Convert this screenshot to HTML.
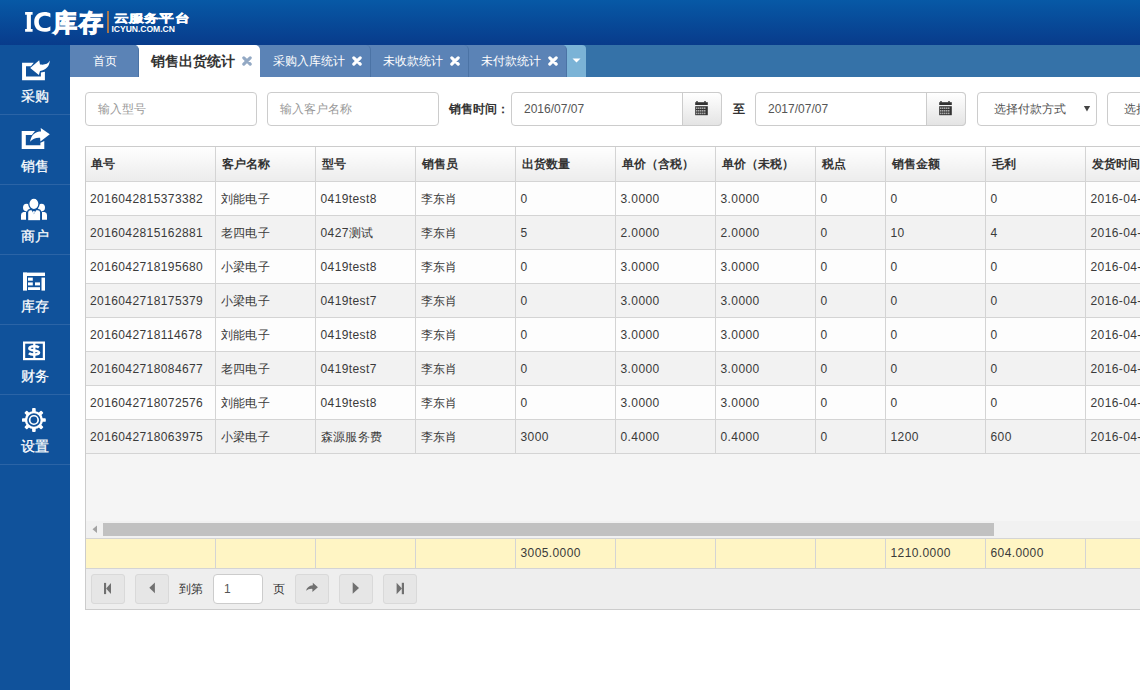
<!DOCTYPE html>
<html><head><meta charset="utf-8">
<style>
*{margin:0;padding:0;box-sizing:border-box}
html,body{width:1140px;height:690px;overflow:hidden;background:#fff;font-family:"Liberation Sans",sans-serif;font-size:12px;color:#333}
.abs{position:absolute}
#hdr{left:0;top:0;width:1140px;height:45px;background:linear-gradient(#0759a6,#083b8b)}
#side{left:0;top:45px;width:70px;height:645px;background:#10529b}
.mi{position:absolute;left:0;width:70px;height:70px;border-bottom:1px solid #2b64a6}
.mi .t{position:absolute;left:0;width:70px;top:43px;text-align:center;color:#fff;font-size:14px;line-height:16px;padding-left:0;-webkit-text-stroke:0.25px #fff}
.mi svg{position:absolute;left:0;top:0}
#tabbar{left:70px;top:45px;width:1070px;height:32px;background:#3572a8}
.tab{position:absolute;top:45px;height:32px;background:#5b83b6;border-right:1px solid #4b73a5;border-radius:0 5px 0 0;color:#fff;font-size:12px;line-height:32px}
.tab .tx{position:absolute;top:0}
.tab svg{position:absolute;top:11px}
.inp{position:absolute;top:92px;height:34px;border:1px solid #ccc;border-radius:4px;background:#fff;font-size:12px;line-height:32px;padding-left:12px;color:#999}
.calb{position:absolute;top:92px;height:34px;border:1px solid #ccc;border-radius:0 4px 4px 0;background:linear-gradient(#fff,#e4e4e4)}
.lbl{position:absolute;top:92px;line-height:34px;font-weight:bold;color:#333;font-size:12px}
#grid{left:85px;top:146px;width:1100px;height:464px;border:1px solid #ccc;background:#f5f5f5;overflow:hidden}
table{border-collapse:collapse;table-layout:fixed;position:absolute;left:-1px;top:-1px;width:1100px}
td,th{border-right:1px solid #d4d4d4;border-bottom:1px solid #d4d4d4;padding-left:5px;text-align:left;white-space:nowrap;overflow:hidden;font-size:12px;color:#333}
th{height:35px;padding-top:2px;padding-left:6px;font-weight:bold;background:linear-gradient(#fff,#ececec)}
td{height:34px;padding-top:2px;letter-spacing:0.4px;color:#3a3a3a}
tr.r0 td{background:#fdfdfd}
tr.r1 td{background:#f2f2f2}
table.ft{top:391px}
table.ft td{height:30px;padding-top:0;padding-bottom:2px;background:#fff5c4;border-top:1px solid #d4d4d4}
#sb{position:absolute;left:0;top:374px;width:1100px;height:18px;background:#f1f1f1}
#thumb{position:absolute;left:17px;top:2px;width:891px;height:13px;background:#c1c1c1}
#pager{position:absolute;left:0;top:422px;width:1100px;height:40px;background:#eeeeee}
.btn{position:absolute;top:574px;width:34px;height:30px;border:1px solid #d9d9d9;border-radius:3px;background:#e6e6e6}
.btn svg{position:absolute;left:0;top:0}
</style></head><body>
<div id="hdr" class="abs">
  <svg class="abs" style="left:0;top:0" width="110" height="45" viewBox="0 0 110 45"><g fill="#fff">
    <path d="M25.1,12.1H32.6V14.8H30.9V29.1H32.6V31.8H25.1V29.1H26.8V14.8H25.1Z"/>
    <path d="M50.4,13.6C49,12.6 47,12.1 44.6,12.1C38.2,12.1 34.2,16 34.2,22C34.2,28 38.2,31.8 44.6,31.8C47,31.8 49,31.3 50.4,30.4V26.2C49.2,27.3 47.4,28.1 45.3,28.1C41.2,28.1 38.8,25.8 38.8,22C38.8,18.2 41.2,15.8 45.3,15.8C47.4,15.8 49.2,16.5 50.4,17.6Z"/>
  </g></svg>
  <div class="abs" id="kucun" style="left:53px;top:5px;font-size:24px;font-weight:bold;color:#fff;line-height:35px;letter-spacing:1.8px;-webkit-text-stroke:1.2px #fff">库存</div>
  <div class="abs" style="left:107px;top:11px;width:2px;height:22px;background:#a8764c"></div>
  <div class="abs" id="yun" style="left:113.8px;top:11.5px;font-size:13px;font-weight:bold;color:#fff;line-height:16px;letter-spacing:0.4px;-webkit-text-stroke:0.6px #fff;transform:scale(1.13,0.85);transform-origin:0 0">云服务平台</div>
  <div class="abs" style="left:111.5px;top:24.5px;font-size:8.6px;font-weight:bold;color:#fff;line-height:9px;letter-spacing:-0.05px">ICYUN.COM.CN</div>
</div>
<div id="side" class="abs">
  <div class="mi" style="top:0">
    <svg width="70" height="70" viewBox="0 0 70 70"><g fill="#fff">
      <path d="M22.07,17.65H33.8L30.9,21.2H26V31.6H40.9V27.45L44.9,26.7V35.2H22.07Z"/>
      <path d="M30.2,23.1L39.2,15.2L40,19.5C44.5,20 48,19.3 49.8,15.6C49.5,21.5 46,25 40,26.1L38.85,30.1Z"/>
    </g></svg>
    <div class="t">采购</div>
  </div>
  <div class="mi" style="top:70px">
    <svg width="70" height="70" viewBox="0 0 70 70"><g fill="#fff">
      <path d="M21.7,16.1H35L31.9,20H25.8V30.2H40.4V27.75L44.3,26V34.1H21.7Z"/>
      <path d="M49.8,19.3L40.7,12.9L41,16.6C36,16.6 31.5,19 30.1,26.8Q34,22.3 40.1,22.8L40.4,26.6Z"/>
    </g></svg>
    <div class="t">销售</div>
  </div>
  <div class="mi" style="top:140px">
    <svg width="70" height="70" viewBox="0 0 70 70"><g fill="#fff">
      <ellipse cx="26.5" cy="22.6" rx="3.5" ry="3.8"/>
      <ellipse cx="41.5" cy="22.6" rx="3.5" ry="3.8"/>
      <path d="M21,34.8V30Q21,27.5 23.5,27H26V34.8Z"/>
      <path d="M47,34.8V30Q47,27.5 44.5,27H42V34.8Z"/>
      <path d="M27.6,35.8V27.5Q27.6,24.7 30.5,24.7H37.8Q40.7,24.7 40.7,27.5V35.8Z" stroke="#10529b" stroke-width="1.2"/>
      <path d="M31.2,24.6L33.9,29.2L36.6,24.6Z" fill="#10529b"/><path d="M33.2,25.9H34.6L34.8,28.1L33.9,29.3L33,28.1Z" fill="#fff"/>
      <ellipse cx="33.9" cy="18.8" rx="5.1" ry="5.8" stroke="#10529b" stroke-width="1.3"/>
    </g></svg>
    <div class="t">商户</div>
  </div>
  <div class="mi" style="top:210px">
    <svg width="70" height="70" viewBox="0 0 70 70"><g fill="#fff">
      <rect x="23" y="17.6" width="22" height="3.4"/>
      <rect x="23" y="17.6" width="4" height="18"/>
      <rect x="41.5" y="22.6" width="3.5" height="13"/>
      <rect x="28" y="22.6" width="4.8" height="3.1"/>
      <rect x="28" y="27.4" width="4.8" height="3"/>
      <rect x="35" y="27.4" width="5" height="3"/>
      <rect x="28" y="32.2" width="12" height="2.8"/>
    </g></svg>
    <div class="t">库存</div>
  </div>
  <div class="mi" style="top:280px">
    <svg width="70" height="70" viewBox="0 0 70 70">
      <rect x="24.1" y="17.6" width="19.8" height="16.5" fill="none" stroke="#fff" stroke-width="2.2"/>
      <rect x="33.2" y="18" width="2.2" height="15" fill="#fff"/><path d="M38.9,22.5C37.8,21.6 36.2,21.3 34.2,21.3C31.4,21.3 29.4,22.1 29.4,23.6C29.4,25 31.4,25.2 34.2,25.5C37.2,25.8 39,26.3 39,27.6C39,29 36.9,29.6 34.2,29.6C31.9,29.6 30,29.2 28.9,28.2" fill="none" stroke="#fff" stroke-width="2.6"/>
    </svg>
    <div class="t">财务</div>
  </div>
  <div class="mi" style="top:350px">
    <svg width="70" height="70" viewBox="0 0 70 70">
      <g fill="#fff" transform="translate(33.9,25)">
        <circle r="9.1"/>
        <rect x="-1.8" y="-11.9" width="3.6" height="5" rx="0.9"/>
        <rect x="-1.8" y="-11.9" width="3.6" height="5" rx="0.9" transform="rotate(45)"/>
        <rect x="-1.8" y="-11.9" width="3.6" height="5" rx="0.9" transform="rotate(90)"/>
        <rect x="-1.8" y="-11.9" width="3.6" height="5" rx="0.9" transform="rotate(135)"/>
        <rect x="-1.8" y="-11.9" width="3.6" height="5" rx="0.9" transform="rotate(180)"/>
        <rect x="-1.8" y="-11.9" width="3.6" height="5" rx="0.9" transform="rotate(225)"/>
        <rect x="-1.8" y="-11.9" width="3.6" height="5" rx="0.9" transform="rotate(270)"/>
        <rect x="-1.8" y="-11.9" width="3.6" height="5" rx="0.9" transform="rotate(315)"/>
        <circle r="5.9" fill="none" stroke="#10529b" stroke-width="1.6"/>
        <circle r="3.4" fill="#10529b"/>
      </g>
    </svg>
    <div class="t">设置</div>
  </div>
</div>
<div id="tabbar" class="abs"></div>
<!-- tabs: drawn right-to-left so left tabs overlap -->
<div class="abs" style="left:561px;top:45px;width:25px;height:32px;background:#7bb3d6;border-radius:0 4px 0 0">
  <svg class="abs" style="left:11px;top:13px" width="9" height="5" viewBox="0 0 9 5"><path d="M0.5,0.5H8.5L4.5,4.5Z" fill="#fff"/></svg>
</div>
<div class="tab" style="left:462px;width:105px">
  <span class="tx" style="left:18.7px">未付款统计</span>
  <svg style="left:86px" width="10" height="10" viewBox="0 0 10 10"><path d="M1.8,1.8L8.2,8.2M8.2,1.8L1.8,8.2" stroke="#fff" stroke-width="3.1" stroke-linecap="round"/></svg>
</div>
<div class="tab" style="left:364px;width:105px">
  <span class="tx" style="left:19px">未收款统计</span>
  <svg style="left:86px" width="10" height="10" viewBox="0 0 10 10"><path d="M1.8,1.8L8.2,8.2M8.2,1.8L1.8,8.2" stroke="#fff" stroke-width="3.1" stroke-linecap="round"/></svg>
</div>
<div class="tab" style="left:253px;width:118px">
  <span class="tx" style="left:20px">采购入库统计</span>
  <svg style="left:99px" width="10" height="10" viewBox="0 0 10 10"><path d="M1.8,1.8L8.2,8.2M8.2,1.8L1.8,8.2" stroke="#fff" stroke-width="3.1" stroke-linecap="round"/></svg>
</div>
<div class="tab" style="left:133px;width:127px;background:#fff;border-right:none;border-radius:5px 5px 0 0">
  <span class="tx" style="left:18px;font-size:14px;font-weight:bold;color:#333">销售出货统计</span>
  <svg style="left:108.8px" width="10" height="10" viewBox="0 0 10 10"><path d="M1.8,1.8L8.2,8.2M8.2,1.8L1.8,8.2" stroke="#93a9c4" stroke-width="3.1" stroke-linecap="round"/></svg>
</div>
<div class="tab" style="left:70px;width:69px;border-radius:0 5px 0 0">
  <span class="tx" style="left:22.5px">首页</span>
</div>

<!-- filters -->
<div class="inp" style="left:85px;width:172px">输入型号</div>
<div class="inp" style="left:267px;width:172px">输入客户名称</div>
<div class="lbl" style="left:449px">销售时间：</div>
<div class="inp" style="left:511px;width:211px;color:#555">2016/07/07</div>
<div class="calb" style="left:682px;width:40px">
  <svg class="abs" style="left:11px;top:8px" width="14" height="15" viewBox="0 0 14 15"><g fill="#333"><rect x="1.2" y="1.2" width="12.6" height="2.8"/><rect x="2" y="0.3" width="2" height="1.2"/><rect x="10" y="0.3" width="2" height="1.2"/><rect x="1.2" y="5.2" width="12.6" height="9"/></g><g fill="#c8c8c8"><rect x="2.2" y="6.4" width="1.2" height="1.6"/><rect x="2.2" y="9.0" width="1.2" height="1.6"/><rect x="2.2" y="11.6" width="1.2" height="1.6"/><rect x="4.2" y="6.4" width="1.2" height="1.6"/><rect x="4.2" y="9.0" width="1.2" height="1.6"/><rect x="4.2" y="11.6" width="1.2" height="1.6"/><rect x="6.2" y="6.4" width="1.2" height="1.6"/><rect x="6.2" y="9.0" width="1.2" height="1.6"/><rect x="6.2" y="11.6" width="1.2" height="1.6"/><rect x="8.2" y="6.4" width="1.2" height="1.6"/><rect x="8.2" y="9.0" width="1.2" height="1.6"/><rect x="8.2" y="11.6" width="1.2" height="1.6"/><rect x="10.2" y="6.4" width="1.2" height="1.6"/><rect x="10.2" y="9.0" width="1.2" height="1.6"/><rect x="10.2" y="11.6" width="1.2" height="1.6"/></g></svg>
</div>
<div class="lbl" style="left:733px;font-size:12px">至</div>
<div class="inp" style="left:755px;width:211px;color:#555">2017/07/07</div>
<div class="calb" style="left:926px;width:40px">
  <svg class="abs" style="left:11px;top:8px" width="14" height="15" viewBox="0 0 14 15"><g fill="#333"><rect x="1.2" y="1.2" width="12.6" height="2.8"/><rect x="2" y="0.3" width="2" height="1.2"/><rect x="10" y="0.3" width="2" height="1.2"/><rect x="1.2" y="5.2" width="12.6" height="9"/></g><g fill="#c8c8c8"><rect x="2.2" y="6.4" width="1.2" height="1.6"/><rect x="2.2" y="9.0" width="1.2" height="1.6"/><rect x="2.2" y="11.6" width="1.2" height="1.6"/><rect x="4.2" y="6.4" width="1.2" height="1.6"/><rect x="4.2" y="9.0" width="1.2" height="1.6"/><rect x="4.2" y="11.6" width="1.2" height="1.6"/><rect x="6.2" y="6.4" width="1.2" height="1.6"/><rect x="6.2" y="9.0" width="1.2" height="1.6"/><rect x="6.2" y="11.6" width="1.2" height="1.6"/><rect x="8.2" y="6.4" width="1.2" height="1.6"/><rect x="8.2" y="9.0" width="1.2" height="1.6"/><rect x="8.2" y="11.6" width="1.2" height="1.6"/><rect x="10.2" y="6.4" width="1.2" height="1.6"/><rect x="10.2" y="9.0" width="1.2" height="1.6"/><rect x="10.2" y="11.6" width="1.2" height="1.6"/></g></svg>
</div>
<div class="inp" style="left:977px;width:120px;color:#555;padding-left:16px">选择付款方式
  <svg class="abs" style="left:105px;top:13px" width="8" height="7" viewBox="0 0 8 7"><path d="M0.9,0H7.1L4,5.5Z" fill="#444"/></svg>
</div>
<div class="inp" style="left:1107px;width:120px;color:#555;padding-left:16px">选择付款方式</div>

<div id="grid" class="abs">
<table><colgroup><col style="width:130px"><col style="width:100px"><col style="width:100px"><col style="width:100px"><col style="width:100px"><col style="width:100px"><col style="width:100px"><col style="width:70px"><col style="width:100px"><col style="width:100px"><col style="width:100px"></colgroup>
<tr><th>单号</th><th>客户名称</th><th>型号</th><th>销售员</th><th>出货数量</th><th>单价（含税）</th><th>单价（未税）</th><th>税点</th><th>销售金额</th><th>毛利</th><th>发货时间</th></tr>
<tr class="r0"><td>2016042815373382</td><td>刘能电子</td><td>0419test8</td><td>李东肖</td><td>0</td><td>3.0000</td><td>3.0000</td><td>0</td><td>0</td><td>0</td><td>2016-04-28</td></tr>
<tr class="r1"><td>2016042815162881</td><td>老四电子</td><td>0427测试</td><td>李东肖</td><td>5</td><td>2.0000</td><td>2.0000</td><td>0</td><td>10</td><td>4</td><td>2016-04-28</td></tr>
<tr class="r0"><td>2016042718195680</td><td>小梁电子</td><td>0419test8</td><td>李东肖</td><td>0</td><td>3.0000</td><td>3.0000</td><td>0</td><td>0</td><td>0</td><td>2016-04-27</td></tr>
<tr class="r1"><td>2016042718175379</td><td>小梁电子</td><td>0419test7</td><td>李东肖</td><td>0</td><td>3.0000</td><td>3.0000</td><td>0</td><td>0</td><td>0</td><td>2016-04-27</td></tr>
<tr class="r0"><td>2016042718114678</td><td>刘能电子</td><td>0419test8</td><td>李东肖</td><td>0</td><td>3.0000</td><td>3.0000</td><td>0</td><td>0</td><td>0</td><td>2016-04-27</td></tr>
<tr class="r1"><td>2016042718084677</td><td>老四电子</td><td>0419test7</td><td>李东肖</td><td>0</td><td>3.0000</td><td>3.0000</td><td>0</td><td>0</td><td>0</td><td>2016-04-27</td></tr>
<tr class="r0"><td>2016042718072576</td><td>刘能电子</td><td>0419test8</td><td>李东肖</td><td>0</td><td>3.0000</td><td>3.0000</td><td>0</td><td>0</td><td>0</td><td>2016-04-27</td></tr>
<tr class="r1"><td>2016042718063975</td><td>小梁电子</td><td>森源服务费</td><td>李东肖</td><td>3000</td><td>0.4000</td><td>0.4000</td><td>0</td><td>1200</td><td>600</td><td>2016-04-27</td></tr>
</table>
<div id="sb"><svg class="abs" style="left:6px;top:4px" width="6" height="9" viewBox="0 0 6 9"><path d="M5,0.5V8L0.5,4.25Z" fill="#a3a3a3"/></svg><div id="thumb"></div></div>
<table class="ft"><colgroup><col style="width:130px"><col style="width:100px"><col style="width:100px"><col style="width:100px"><col style="width:100px"><col style="width:100px"><col style="width:100px"><col style="width:70px"><col style="width:100px"><col style="width:100px"><col style="width:100px"></colgroup><tr><td></td><td></td><td></td><td></td><td>3005.0000</td><td></td><td></td><td></td><td>1210.0000</td><td>604.0000</td><td></td></tr></table>
<div id="pager"></div>
</div>
<!-- pager -->
<div class="btn" style="left:91px">
  <svg width="34" height="30" viewBox="0 0 34 30"><g fill="#707070"><rect x="12" y="7.9" width="2.1" height="11.2"/><path d="M19,7.9V19.1L14.1,13.5Z"/></g></svg>
</div>
<div class="btn" style="left:135px">
  <svg width="34" height="30" viewBox="0 0 34 30"><path d="M18.9,7.5V18.2L13.3,12.85Z" fill="#707070"/></svg>
</div>
<div class="abs" style="left:179px;top:574px;line-height:30px;color:#333">到第</div>
<div class="abs" style="left:213px;top:574px;width:50px;height:30px;border:1px solid #ccc;border-radius:4px;background:#fff;line-height:28px;padding-left:10px;color:#555">1</div>
<div class="abs" style="left:273px;top:574px;line-height:30px;color:#333">页</div>
<div class="btn" style="left:295px">
  <svg width="34" height="30" viewBox="0 0 34 30"><path d="M21.9,12.3L16.8,7.8V10.3Q11.3,10.8 10,15.8Q12.5,13.6 16.4,13.9V17Z" fill="#707070"/></svg>
</div>
<div class="btn" style="left:339px">
  <svg width="34" height="30" viewBox="0 0 34 30"><path d="M12.7,7.3V18.7L19,13Z" fill="#707070"/></svg>
</div>
<div class="btn" style="left:383px">
  <svg width="34" height="30" viewBox="0 0 34 30"><g fill="#707070"><rect x="17.8" y="7.8" width="2.2" height="11.4"/><path d="M12.6,7.8V19.2L18,13.5Z"/></g></svg>
</div>
</body></html>
